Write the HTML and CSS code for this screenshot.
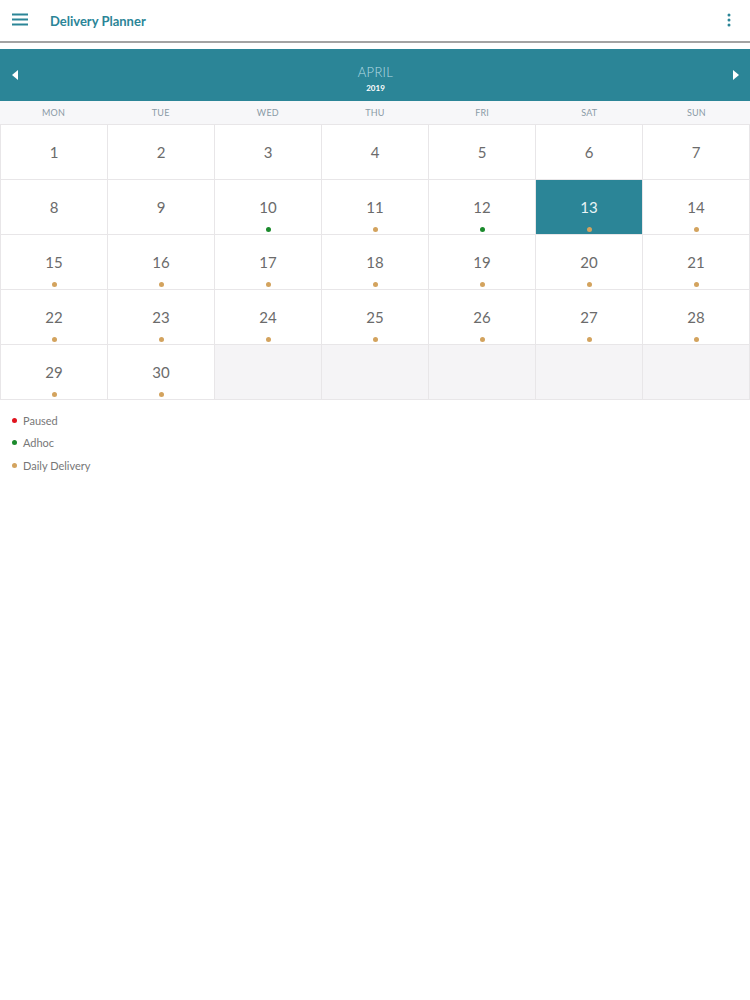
FILE: index.html
```html
<!DOCTYPE html>
<html>
<head>
<meta charset="utf-8">
<link rel="stylesheet" href="styles.css">
</head>
<body>
<header class="topbar">
  <svg class="menu" width="16" height="13" viewBox="0 0 16 13"><rect x="0" y="0.5" width="16" height="2" fill="#2b8597"/><rect x="0" y="5.5" width="16" height="2" fill="#2b8597"/><rect x="0" y="10.5" width="16" height="2" fill="#2b8597"/></svg>
  <span class="title">Delivery Planner</span>
  <svg class="kebab" width="4" height="14" viewBox="0 0 4 14"><circle cx="2" cy="2" r="1.5" fill="#2b8597"/><circle cx="2" cy="7" r="1.5" fill="#2b8597"/><circle cx="2" cy="12" r="1.5" fill="#2b8597"/></svg>
</header>
<div class="monthbar">
  <svg class="arrow" width="6" height="10" viewBox="0 0 6 10"><polygon points="6,0 6,10 0,5" fill="#fff"/></svg>
  <div class="month">
    <div class="mname">APRIL</div>
    <div class="year">2019</div>
  </div>
  <svg class="arrow" width="6" height="10" viewBox="0 0 6 10"><polygon points="0,0 0,10 6,5" fill="#fff"/></svg>
</div>
<div class="weekdays">
  <div>MON</div><div>TUE</div><div>WED</div><div>THU</div><div>FRI</div><div>SAT</div><div>SUN</div>
</div>
<div class="grid">
  <div class="cell"><span class="num">1</span></div>
  <div class="cell"><span class="num">2</span></div>
  <div class="cell"><span class="num">3</span></div>
  <div class="cell"><span class="num">4</span></div>
  <div class="cell"><span class="num">5</span></div>
  <div class="cell"><span class="num">6</span></div>
  <div class="cell"><span class="num">7</span></div>
  <div class="cell"><span class="num">8</span></div>
  <div class="cell"><span class="num">9</span></div>
  <div class="cell"><span class="num">10</span><span class="dot green"></span></div>
  <div class="cell"><span class="num">11</span><span class="dot gold"></span></div>
  <div class="cell"><span class="num">12</span><span class="dot green"></span></div>
  <div class="cell selected"><span class="num">13</span><span class="dot gold"></span></div>
  <div class="cell"><span class="num">14</span><span class="dot gold"></span></div>
  <div class="cell"><span class="num">15</span><span class="dot gold"></span></div>
  <div class="cell"><span class="num">16</span><span class="dot gold"></span></div>
  <div class="cell"><span class="num">17</span><span class="dot gold"></span></div>
  <div class="cell"><span class="num">18</span><span class="dot gold"></span></div>
  <div class="cell"><span class="num">19</span><span class="dot gold"></span></div>
  <div class="cell"><span class="num">20</span><span class="dot gold"></span></div>
  <div class="cell"><span class="num">21</span><span class="dot gold"></span></div>
  <div class="cell"><span class="num">22</span><span class="dot gold"></span></div>
  <div class="cell"><span class="num">23</span><span class="dot gold"></span></div>
  <div class="cell"><span class="num">24</span><span class="dot gold"></span></div>
  <div class="cell"><span class="num">25</span><span class="dot gold"></span></div>
  <div class="cell"><span class="num">26</span><span class="dot gold"></span></div>
  <div class="cell"><span class="num">27</span><span class="dot gold"></span></div>
  <div class="cell"><span class="num">28</span><span class="dot gold"></span></div>
  <div class="cell"><span class="num">29</span><span class="dot gold"></span></div>
  <div class="cell"><span class="num">30</span><span class="dot gold"></span></div>
  <div class="cell empty"></div>
  <div class="cell empty"></div>
  <div class="cell empty"></div>
  <div class="cell empty"></div>
  <div class="cell empty"></div>
</div>
<ul class="legend">
  <li><span class="ldot red"></span>Paused</li>
  <li><span class="ldot green"></span>Adhoc</li>
  <li><span class="ldot gold"></span>Daily Delivery</li>
</ul>
</body>
</html>
```
FILE: styles.css
```css
* { box-sizing: border-box; }
body {
  margin: 0;
  background: #fff;
  font-family: Lato, "Open Sans", sans-serif;
  width: 750px;
}
.topbar {
  height: 43px;
  display: flex;
  align-items: center;
  padding: 0 19px 3px 12px;
  border-bottom: 2px solid #a3a3a3;
}
.title {
  margin-left: 22px;
  margin-top: 3px;
  font-size: 13px;
  font-weight: 700;
  color: #2b8597;
  flex: 1;
}
.kebab { margin-top: 2px; }
.monthbar {
  margin-top: 6px;
  height: 52px;
  background: #2b8597;
  display: flex;
  align-items: center;
  justify-content: space-between;
  padding: 0 11px 0 12px;
}
.month {
  text-align: center;
  padding-top: 8px;
}
.mname {
  font-size: 13px;
  font-weight: 300;
  color: #b4dce4;
  letter-spacing: 0.3px;
  line-height: 15px;
}
.year {
  margin-top: 2px;
  font-size: 8px;
  font-weight: 700;
  color: #fff;
  line-height: 12px;
}
.weekdays {
  height: 23px;
  background: #f7f7f9;
  display: grid;
  grid-template-columns: repeat(7, 1fr);
  align-items: center;
  text-align: center;
  font-size: 9px;
  color: #8a9aa6;
  letter-spacing: 0.2px;
}
.grid {
  display: grid;
  grid-template-columns: repeat(7, 1fr);
  border-top: 1px solid #e8e6e8;
  border-left: 1px solid #e8e6e8;
}
.cell {
  height: 55px;
  border-right: 1px solid #e8e6e8;
  border-bottom: 1px solid #e8e6e8;
  display: flex;
  flex-direction: column;
  align-items: center;
}
.num {
  margin-top: 18px;
  font-size: 15px;
  color: #6b6b6b;
  line-height: 18px;
}
.dot {
  margin-top: 11px;
  width: 5px;
  height: 5px;
  border-radius: 50%;
}
.selected { background: #2b8597; }
.selected .num { color: #e8f4f6; }
.empty { background: #f5f4f6; }
.gold { background: #d3a35e; }
.green { background: #1b8a2c; }
.red { background: #e0141e; }
.legend {
  list-style: none;
  margin: 9px 0 0 0;
  padding: 0 0 0 12px;
}
.legend li {
  display: flex;
  align-items: center;
  height: 22.5px;
  font-size: 11px;
  color: #777;
}
.ldot {
  width: 5px;
  height: 5px;
  border-radius: 50%;
  margin-right: 6px;
}
```
